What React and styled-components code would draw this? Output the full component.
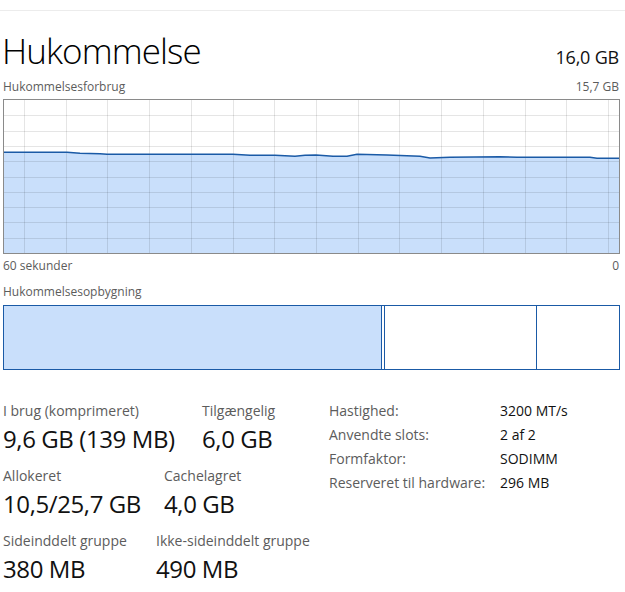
import styled, { createGlobalStyle } from 'styled-components'

const GlobalStyle = createGlobalStyle`
    html, body {
        margin: 0;
        padding: 0;
        background: #ffffff;
    }

    body {
        font-family: 'Open Sans', 'Noto Sans', 'Liberation Sans', sans-serif;
        color: #1a1a1a;
    }
`

// local pixel coordinates inside the usage chart (615 x 153)
const CHART_W = 615
const CHART_H = 153

const usagePoints = [
    [0, 52.3], [63, 52.3], [76, 53.3], [96, 53.7], [103, 54.3], [229, 54.3],
    [246, 55.3], [271, 55.3], [291, 56.3], [301, 55.3], [312, 55], [329, 56.3],
    [343, 56.3], [353, 54.3], [383, 55], [416, 56.3], [426, 58], [446, 57.3],
    [496, 56.7], [513, 57.3], [586, 57.3], [593, 58.3], [615, 58.3],
]

const stats = [
    {
        firstWidth: 199,
        items: [
            { label: 'I brug (komprimeret)', value: '9,6 GB (139 MB)' },
            { label: 'Tilgængelig', value: '6,0 GB' },
        ],
    },
    {
        firstWidth: 161,
        items: [
            { label: 'Allokeret', value: '10,5/25,7 GB' },
            { label: 'Cachelagret', value: '4,0 GB' },
        ],
    },
    {
        firstWidth: 153,
        items: [
            { label: 'Sideinddelt gruppe', value: '380 MB' },
            { label: 'Ikke-sideinddelt gruppe', value: '490 MB' },
        ],
    },
]

const details = [
    ['Hastighed:', '3200 MT/s'],
    ['Anvendte slots:', '2 af 2'],
    ['Formfaktor:', 'SODIMM'],
    ['Reserveret til hardware:', '296 MB'],
]

const UsageChart = () => {
    const line = usagePoints.map(([x, y], i) => `${i ? 'L' : 'M'}${x} ${y}`).join(' ')
    const area = `${line} L${CHART_W} ${CHART_H} L0 ${CHART_H} Z`

    const cols = Array.from({ length: 15 }, (_, i) => 20 + i * 41.71)
    const rows = Array.from({ length: 9 }, (_, i) => 15.3 * (i + 1))

    return (
        <ChartBox>
            <svg
                width={CHART_W}
                height={CHART_H}
                viewBox={`0 0 ${CHART_W} ${CHART_H}`}
                style={{ display: 'block' }}
            >
                <path d={area} fill='#c9dffb' />
                {cols.map(x => (
                    <line
                        key={'c' + x}
                        x1={Math.round(x) + 0.5}
                        x2={Math.round(x) + 0.5}
                        y1={0}
                        y2={CHART_H}
                        stroke='rgba(0,0,0,0.1)'
                    />
                ))}
                {rows.map(y => (
                    <line
                        key={'r' + y}
                        x1={0}
                        x2={CHART_W}
                        y1={Math.round(y) + 0.5}
                        y2={Math.round(y) + 0.5}
                        stroke='rgba(0,0,0,0.1)'
                    />
                ))}
                <path d={line} fill='none' stroke='#1a5aa6' strokeWidth='1.5' />
            </svg>
        </ChartBox>
    )
}

const App = () => {
    return (
        <>
            <GlobalStyle />
            <Page>
                <TopRule />
                <Header>
                    <Title>Hukommelse</Title>
                    <Total>16,0 GB</Total>
                </Header>

                <CaptionRow $top={4}>
                    <span>Hukommelsesforbrug</span>
                    <span>15,7 GB</span>
                </CaptionRow>
                <UsageChart />
                <CaptionRow $top={4}>
                    <span>60 sekunder</span>
                    <span>0</span>
                </CaptionRow>

                <CaptionRow $top={10}>
                    <span>Hukommelsesopbygning</span>
                </CaptionRow>
                <CompositionBar>
                    <Segment $width={378} $fill='#c9dffb' />
                    <Segment $width={3} />
                    <Segment $width={152} />
                    <Segment $width={82} $last />
                </CompositionBar>

                <Bottom>
                    <StatGrid>
                        {stats.map((row, r) => (
                            <StatRow key={r}>
                                {row.items.map((s, i) => (
                                    <Stat key={s.label} $width={i === 0 ? row.firstWidth : null}>
                                        <StatLabel>{s.label}</StatLabel>
                                        <StatValue>{s.value}</StatValue>
                                    </Stat>
                                ))}
                            </StatRow>
                        ))}
                    </StatGrid>

                    <DetailTable>
                        {details.map(([k, v]) => (
                            <DetailRow key={k}>
                                <DetailKey>{k}</DetailKey>
                                <DetailValue>{v}</DetailValue>
                            </DetailRow>
                        ))}
                    </DetailTable>
                </Bottom>
            </Page>
        </>
    )
}

const Page = styled.div`
    width: 625px;
    height: 592px;
    overflow: hidden;
    box-sizing: border-box;
    padding: 10px 6px 0 3px;
`

const TopRule = styled.div`
    height: 1px;
    margin: 0 -6px 0 -3px;
    background: #ececec;
`

const Header = styled.div`
    display: flex;
    justify-content: space-between;
    align-items: baseline;
    margin-top: 16px;
`

const Title = styled.h1`
    margin: 0 0 0 -1px;
    font-size: 35px;
    font-weight: 300;
    letter-spacing: -0.9px;
    line-height: 48px;
    color: #000;
`

const Total = styled.div`
    font-size: 18px;
    line-height: 24px;
    letter-spacing: -0.2px;
    color: #111;
`

const CaptionRow = styled.div`
    display: flex;
    justify-content: space-between;
    margin-top: ${props => props.$top}px;
    font-size: 12px;
    line-height: 16px;
    color: #5c5c5c;
`

const ChartBox = styled.div`
    margin-top: 4px;
    width: ${CHART_W}px;
    border: 1px solid #8a8a8a;
`

const CompositionBar = styled.div`
    display: flex;
    margin-top: 5px;
    width: ${CHART_W}px;
    height: 63px;
    border: 1px solid #1a5aa6;
`

const Segment = styled.div`
    box-sizing: border-box;
    width: ${props => props.$width}px;
    background: ${props => props.$fill || '#ffffff'};
    border-right: ${props => (props.$last ? 'none' : '1px solid #1a5aa6')};
`

const Bottom = styled.div`
    display: flex;
    margin-top: 29px;
`

const StatGrid = styled.div`
    width: 326px;
    padding-top: 2px;
`

const StatRow = styled.div`
    display: flex;
    margin-bottom: 12px;
`

const Stat = styled.div`
    width: ${props => (props.$width ? props.$width + 'px' : 'auto')};
    flex-shrink: 0;
`

const StatLabel = styled.div`
    font-size: 14px;
    line-height: 20px;
    color: #5c5c5c;
    white-space: nowrap;
`

const StatValue = styled.div`
    margin-top: 3px;
    font-size: 24px;
    line-height: 30px;
    letter-spacing: -0.4px;
    color: #111;
    white-space: nowrap;
`

const DetailTable = styled.div`
    display: flex;
    flex-direction: column;
`

const DetailRow = styled.div`
    display: flex;
    font-size: 14px;
    line-height: 24px;
`

const DetailKey = styled.div`
    width: 171px;
    color: #5c5c5c;
`

const DetailValue = styled.div`
    color: #111;
`

export default App
